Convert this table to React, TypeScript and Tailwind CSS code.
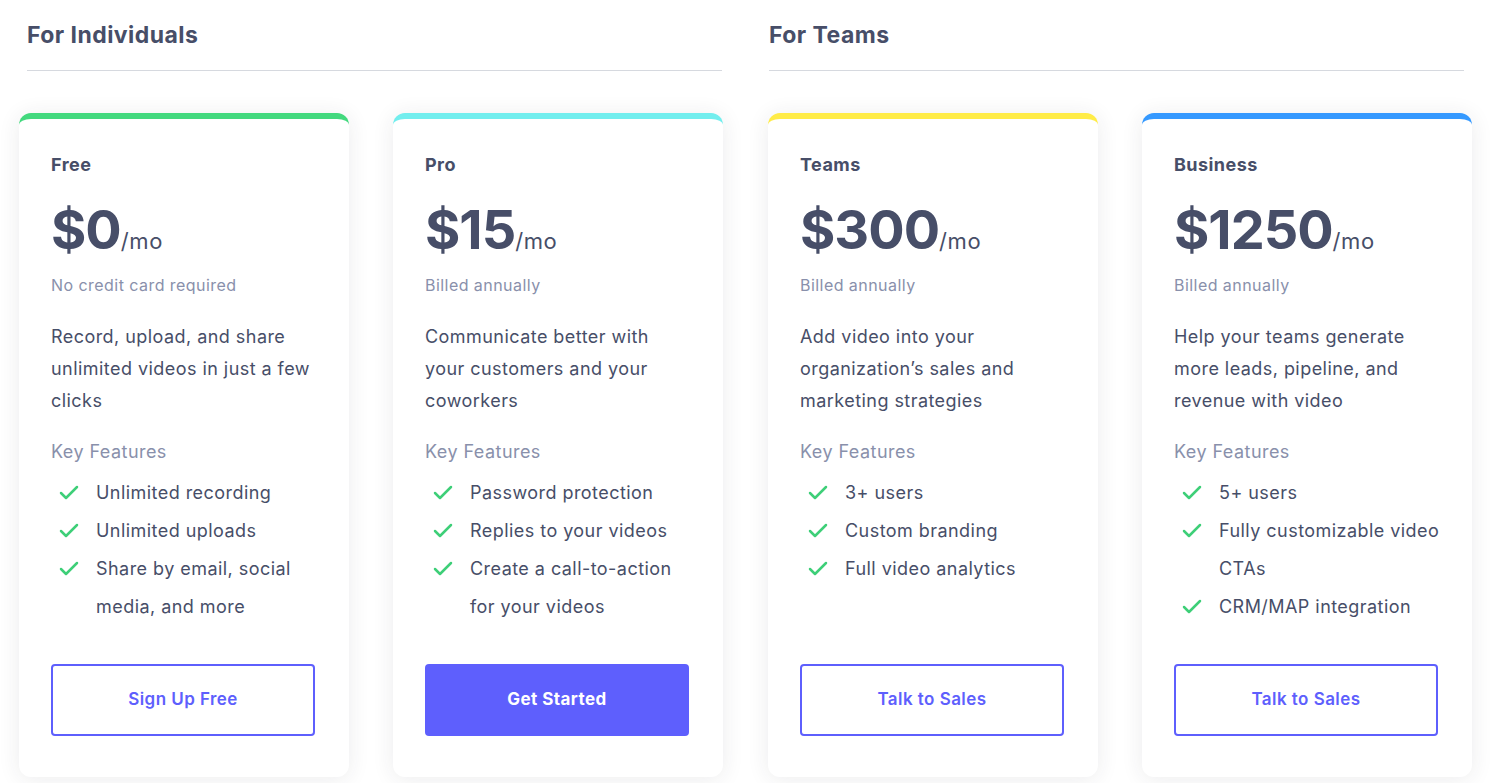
import { Check } from 'lucide-react';

type Plan = {
  name: string;
  price: string;
  note: string;
  description: string;
  features: string[];
  cta: string;
  bar: string;
  primary?: boolean;
};

const individuals: Plan[] = [
  {
    name: 'Free',
    price: '$0',
    note: 'No credit card required',
    description: 'Record, upload, and share unlimited videos in just a few clicks',
    features: ['Unlimited recording', 'Unlimited uploads', 'Share by email, social media, and more'],
    cta: 'Sign Up Free',
    bar: 'border-t-[#43d97e]',
  },
  {
    name: 'Pro',
    price: '$15',
    note: 'Billed annually',
    description: 'Communicate better with your customers and your coworkers',
    features: ['Password protection', 'Replies to your videos', 'Create a call-to-action for your videos'],
    cta: 'Get Started',
    bar: 'border-t-[#72eeee]',
    primary: true,
  },
];

const teams: Plan[] = [
  {
    name: 'Teams',
    price: '$300',
    note: 'Billed annually',
    description: 'Add video into your organization’s sales and marketing strategies',
    features: ['3+ users', 'Custom branding', 'Full video analytics'],
    cta: 'Talk to Sales',
    bar: 'border-t-[#ffec47]',
  },
  {
    name: 'Business',
    price: '$1250',
    note: 'Billed annually',
    description: 'Help your teams generate more leads, pipeline, and revenue with video',
    features: ['5+ users', 'Fully customizable video CTAs', 'CRM/MAP integration'],
    cta: 'Talk to Sales',
    bar: 'border-t-[#3599ff]',
  },
];

function PlanCard({ plan }: { plan: Plan }) {
  return (
    <div
      className={`flex w-[330px] flex-col rounded-xl border-t-[6px] bg-white pl-8 pr-8 pt-[34px] pb-[41px] shadow-[0_2px_22px_rgba(40,45,60,0.09)] ${plan.bar}`}
    >
      <h3 className="text-[18px] font-bold leading-[24px] text-[#474e68]">{plan.name}</h3>
      <div className="mt-[21px] flex items-baseline text-[#474e68]">
        <span className="text-[54px] font-bold leading-[64px] tracking-[-1px]">{plan.price}</span>
        <span className="text-[22px] leading-[64px] tracking-[0.6px]">/mo</span>
      </div>
      <p className="mt-[1px] text-[16px] leading-[22px] text-[#8990ab]">{plan.note}</p>
      <p className="mt-[25px] text-[18px] leading-[32px] text-[#474e68]">{plan.description}</p>
      <p className="mt-[23px] text-[18px] leading-[24px] text-[#8990ab]">Key Features</p>
      <ul className="mt-[10px]">
        {plan.features.map((f) => (
          <li key={f} className="flex items-start text-[18px] leading-[38px] text-[#474e68]">
            <Check className="mt-[7px] mr-[15px] ml-[6px] h-[24px] w-[24px] shrink-0 text-[#3ecf78]" strokeWidth={2.5} />
            <span>{f}</span>
          </li>
        ))}
      </ul>
      <div className="mt-auto pt-[38px]">
        <button
          className={
            plan.primary
              ? 'flex h-[72px] w-[264px] items-center justify-center rounded-[4px] bg-[#5e5ffd] text-[17px] font-bold text-white'
              : 'flex h-[72px] w-[264px] items-center justify-center rounded-[4px] border-2 border-[#5e5ffd] text-[17px] font-semibold text-[#5e5ffd]'
          }
        >
          {plan.cta}
        </button>
      </div>
    </div>
  );
}

function Group({ title, plans, offset }: { title: string; plans: Plan[]; offset: string }) {
  return (
    <div className="w-[704px]">
      <div className={`${offset} w-[695px] border-b border-[#d6d9df] pb-[19px] pt-[19px]`}>
        <h2 className="text-[23px] font-bold leading-[32px] text-[#474e68]">{title}</h2>
      </div>
      <div className="mt-[42px] flex items-stretch justify-between">
        {plans.map((p) => (
          <PlanCard key={p.name} plan={p} />
        ))}
      </div>
    </div>
  );
}

export default function App() {
  return (
    <div
      className="min-h-screen bg-white tracking-[0.45px]"
      style={{ fontFamily: 'Inter, "Noto Sans", sans-serif' }}
    >
      <div className="flex gap-[45px] pl-[19px]">
        <Group title="For Individuals" plans={individuals} offset="ml-[8px]" />
        <Group title="For Teams" plans={teams} offset="ml-[1px]" />
      </div>
    </div>
  );
}
